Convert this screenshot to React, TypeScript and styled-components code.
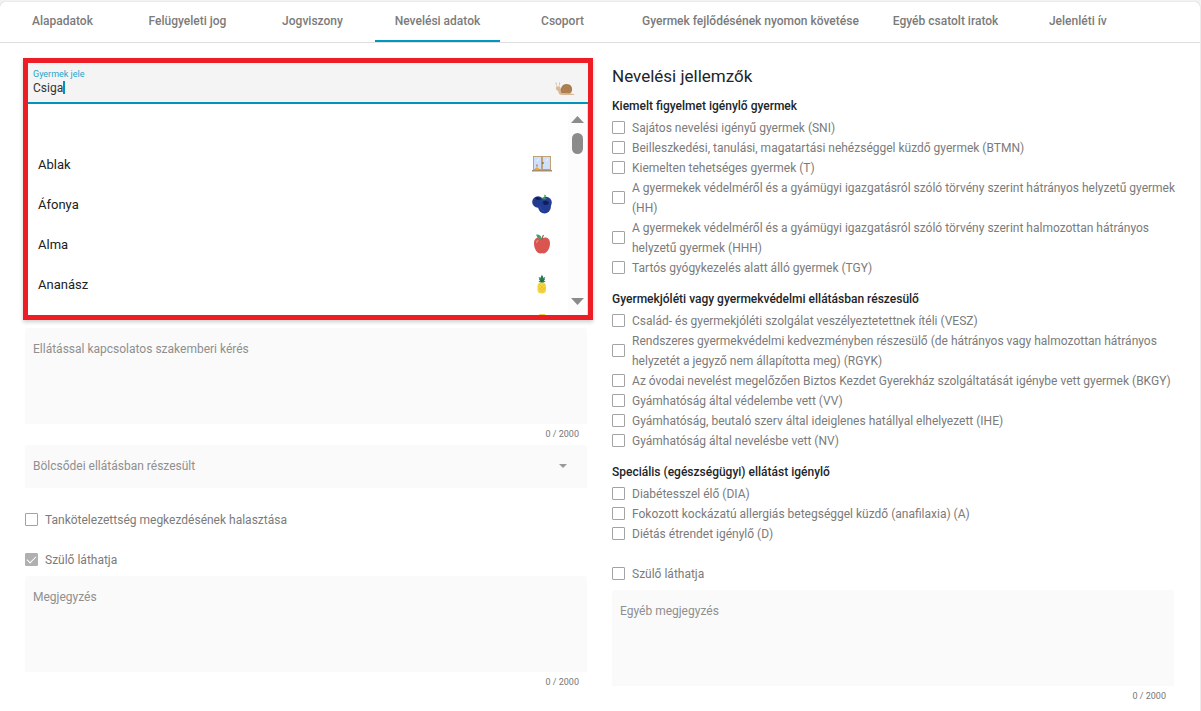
import React, { useId, useState } from "react";
import styled, { createGlobalStyle } from "styled-components";

const GlobalStyle = createGlobalStyle`
  *, *::before, *::after { box-sizing: border-box; }
  body {
    margin: 0;
    background: #f2f2f2;
    color: #212529;
    font-family: Roboto, "Liberation Sans", sans-serif;
    font-size: 12px;
    line-height: 20px;
  }
  button, input, select, textarea { font: inherit; color: inherit; }
`;

const Page = styled.div`
  display: flex;
  min-height: 100vh;
  padding: 2px 1px 0 0;
`;

const Card = styled.main`
  flex: 1;
  min-width: 0;
  background: #fff;
  border-radius: 5px 5px 0 0;
  box-shadow: 0 0 1px rgba(0, 0, 0, 0.3);
`;

const Tabs = styled.nav`
  display: flex;
  height: 41px;
  border-bottom: 1px solid #dedede;
`;

const Tab = styled.button<{ $active?: boolean }>`
  flex: none;
  min-width: 125px;
  padding: 0 17px;
  border: 0;
  border-bottom: 2px solid ${(p) => (p.$active ? "#0097c0" : "transparent")};
  background: none;
  color: #7b7b7b;
  font-weight: 500;
  cursor: pointer;
`;

const Columns = styled.div`
  display: grid;
  grid-template-columns: minmax(0, 1fr) minmax(0, 1fr);
  gap: 25px;
  padding: 15px 26px 0 25px;
`;

const Column = styled.section`
  display: flex;
  flex-direction: column;
`;

const Combo = styled.div`
  margin: 0 -6px 8px -2px;
  border: 5px solid #ee1c25;
  background: #fff;
  box-shadow: 0 2px 4px rgba(0, 0, 0, 0.2);
`;

const ComboField = styled.div`
  display: flex;
  align-items: flex-end;
  justify-content: space-between;
  height: 41px;
  padding: 0 13px 6px 5px;
  border-bottom: 2px solid #0094bb;
  background: #f4f4f4;
`;

const ComboText = styled.div`
  display: flex;
  flex-direction: column;
`;

const FloatingLabel = styled.label`
  color: #1fa5cb;
  font-size: 9px;
  line-height: 10px;
`;

const InputLine = styled.div`
  display: flex;
  align-items: center;
  height: 17px;
`;

const ComboInput = styled.input`
  field-sizing: content;
  padding: 0;
  border: 0;
  outline: 0;
  background: none;
  color: #333;
  line-height: 16px;
`;

const Caret = styled.span`
  width: 2px;
  height: 13px;
  background: #0094bb;
`;

const Popup = styled.div`
  display: flex;
  height: 211px;
  overflow: hidden;
`;

const Options = styled.ul`
  flex: 1;
  margin: 0;
  padding: 0;
  list-style: none;
`;

const Option = styled.li`
  display: flex;
  align-items: center;
  justify-content: space-between;
  height: 40px;
  padding: 0 16px 0 10px;
  color: #212121;
  font-size: 13px;
`;

const OptionName = styled.span`
  padding-top: 2px;
`;

const ScrollTrack = styled.div`
  display: flex;
  flex-direction: column;
  align-items: center;
  width: 20px;
  padding: 12px 1px 10px 0;
  border-right: 1px solid #e0e0e0;
  background: #fcfcfc;
`;

const ScrollThumb = styled.div`
  width: 11px;
  height: 21px;
  margin: 10px 0 auto;
  border-radius: 6px;
  background: #8b8b8b;
`;

const Box = styled.div`
  display: flex;
  flex-direction: column;
  height: 96px;
  padding: 11px 8px 0;
  border-radius: 3px 3px 0 0;
  background: #fafafa;
`;

const BoxLabel = styled.label`
  color: #8f8f8f;
`;

const Area = styled.textarea`
  flex: 1;
  padding: 0;
  border: 0;
  outline: 0;
  background: none;
  resize: none;
`;

const Counter = styled.div`
  padding-right: 8px;
  color: #777;
  font-size: 9px;
  line-height: 20px;
  text-align: right;
`;

const SelectBox = styled.div`
  display: flex;
  align-items: center;
  height: 43px;
  margin: 1px 0 22px;
  padding: 0 20px 1px 8px;
  border-radius: 3px 3px 0 0;
  background: #fafafa;
`;

const Select = styled.select`
  flex: 1;
  padding: 0;
  border: 0;
  outline: 0;
  background: none;
  appearance: none;
  color: #8f8f8f;
`;

const CheckRow = styled.label<{ $gapBelow?: number }>`
  display: flex;
  align-items: center;
  gap: 7px;
  margin-right: -8px;
  margin-bottom: ${(p) => p.$gapBelow ?? 0}px;
  color: #7b7b7b;
`;

const Check = styled.input`
  flex: none;
  display: grid;
  place-items: center;
  width: 13px;
  height: 13px;
  margin: 0 0 1px;
  border: 1px solid #a3a3a3;
  border-radius: 1px;
  background: #fff;
  appearance: none;

  &:checked {
    border-color: #b0b0b0;
    background: #b0b0b0;
  }

  &:checked::after {
    content: "";
    width: 9px;
    height: 5px;
    border: solid #fff;
    border-width: 0 0 1px 1px;
    transform: translateY(-1px) rotate(-45deg);
  }
`;

const Title = styled.h2`
  margin: 8px 0 10px;
  font-size: 17px;
  font-weight: 400;
  line-height: 20px;
`;

const Group = styled.fieldset`
  min-width: 0;
  margin: 0 0 11px;
  padding: 0;
  border: 0;

  &:last-of-type {
    margin-bottom: 20px;
  }
`;

const Legend = styled.legend`
  margin-bottom: 2px;
  padding: 0;
  font-weight: 500;
`;

const Snail = () => (
  <svg width="20" height="14" viewBox="0 0 20 14" aria-hidden="true">
    <path d="M2 5 1 1M4 5l.6-4" stroke="#d8bfa5" strokeWidth=".7" fill="none" />
    <circle cx="1" cy="1" r=".6" fill="#c9aa8c" />
    <circle cx="4.600" cy="1" r=".6" fill="#c9aa8c" />
    <path d="M.8 6c0-2 4.600-2.400 5 .5.3 2 1.200 3.500 3 4l6.500.8 4 .9c.5.400 0 .8-.7.8H7c-2.500 0-3.600-1.200-3.800-4C1.800 8.200.8 7.500.8 6Z" fill="#d6b999" />
    <path d="M6.500 11c-2-4 .5-9 5-9 4 0 6 3 5.500 6.200-.3 1.500-1 2.500-2 3Z" fill="#a97b4c" />
    <path d="M8.500 10c-1-3 .5-5.500 3.200-5.500s3.700 2.200 3.200 4.200c-.6 2-4.500 2-4.600 0 0-1.700 2.200-2 2.600-.7" fill="none" stroke="#ba8b5b" strokeWidth=".8" />
  </svg>
);

const WindowIcon = () => (
  <svg width="20" height="16" viewBox="0 0 20 16" aria-hidden="true">
    <path d="M1 0h18v14H1z" fill="#bfa274" />
    <path d="M2 1h7v12H2zM11 1h7v12h-7z" fill="#cfe0fd" />
    <path d="m5 5 2-2M14 5l2-2" stroke="#f1f6ff" />
    <path d="M0 14h20v1.500H0z" fill="#a58e70" />
    <path d="M5 12V9" stroke="#6fae74" strokeWidth=".8" />
    <circle cx="5" cy="9.200" r="1" fill="#e28580" />
    <path d="M3 12h4l-.5 2h-3z" fill="#f4a52a" />
    <path d="M11 6v2" stroke="#665447" />
  </svg>
);

const Blueberry = () => (
  <svg width="20" height="20" viewBox="0 0 20 20" aria-hidden="true">
    <circle cx="6" cy="8" r="5.800" fill="#223b8c" />
    <circle cx="14" cy="8.500" r="5.800" fill="#263f91" />
    <circle cx="12.500" cy="13" r="6.400" fill="#213c92" />
    <path d="m3 4 2-1 3 1 1 1.500-4 .5Z" fill="#101d5c" />
    <path d="m10.500 8 3-1.500L17 8l-1 2.500-4 .5Z" fill="#111c5d" />
    <path d="M12 5.500c-1.500 0-2.500-1-2-2l2 1L12.500.5 14 1.500 13 4l2 1Z" fill="#409666" />
    <path d="M8 12c0 3 2 5 4 5" fill="none" stroke="#3450a5" strokeWidth=".8" />
  </svg>
);

const Apple = () => (
  <svg width="20" height="20" viewBox="0 0 20 20" aria-hidden="true">
    <path d="M10 4.500C5 2 2 5 2 9.500 2 14.500 5 19.500 8.500 19.500c1 0 2-.4 3 0C15 19.500 18 14 18 9.500 18 5 15 2 10 4.500Z" fill="#da5550" />
    <path d="M10 6c0-2 .5-3.500 1.500-5" stroke="#9b5848" strokeWidth="1.200" fill="none" />
    <path d="M9.500 5C6 5 4.500 3 4.300.5 8 .5 9.500 2 9.500 5Z" fill="#4a9b72" />
    <path d="M4.500 9c0-2 .7-2.500 1.800-2.700" stroke="#f08c83" strokeWidth="1.200" fill="none" />
  </svg>
);

const Pineapple = () => (
  <svg width="20" height="20" viewBox="0 0 20 20" aria-hidden="true">
    <path d="M10 9.500 6.500 7.500 8 6.500 6.500 3l2 .8L10 .5l1.200 3.300 2-.8L12 6.500l1.500 1Z" fill="#34895c" />
    <path d="M10 2v6M7.500 5l2.500 3 2.500-3" fill="none" stroke="#22644a" />
    <rect x="5.500" y="8.500" width="8.500" height="11" rx="3.800" fill="#f5d640" />
    <path d="m7 10 6 6M6.500 13l5 5M13 10l-6 6M13.500 13l-5 5" stroke="#dfb830" strokeWidth=".6" />
  </svg>
);

const Banana = () => (
  <svg width="20" height="20" viewBox="0 0 20 20" aria-hidden="true">
    <path d="M7 0h6c3 8 0 15-9 19l-2-2C8 13 9 7 7 0Z" fill="#f6cf3b" />
  </svg>
);

const Arrow = ({ up, width = 13, height = 7, color = "#8b8b8b" }: { up?: boolean; width?: number; height?: number; color?: string }) => (
  <svg width={width} height={height} viewBox="0 0 12 6" preserveAspectRatio="none" aria-hidden="true">
    <path d={up ? "M0 6 6 0l6 6Z" : "M0 0h12L6 6Z"} fill={color} />
  </svg>
);

const tabs = [
  "Alapadatok",
  "Felügyeleti jog",
  "Jogviszony",
  "Nevelési adatok",
  "Csoport",
  "Gyermek fejlődésének nyomon követése",
  "Egyéb csatolt iratok",
  "Jelenléti ív",
];

const signs = [
  { id: "none", name: "", Icon: null },
  { id: "window", name: "Ablak", Icon: WindowIcon },
  { id: "blueberry", name: "Áfonya", Icon: Blueberry },
  { id: "apple", name: "Alma", Icon: Apple },
  { id: "pineapple", name: "Ananász", Icon: Pineapple },
  { id: "banana", name: "", Icon: Banana },
];

const groups = [
  {
    title: "Kiemelt figyelmet igénylő gyermek",
    items: [
      "Sajátos nevelési igényű gyermek (SNI)",
      "Beilleszkedési, tanulási, magatartási nehézséggel küzdő gyermek (BTMN)",
      "Kiemelten tehetséges gyermek (T)",
      "A gyermekek védelméről és a gyámügyi igazgatásról szóló törvény szerint hátrányos helyzetű gyermek (HH)",
      "A gyermekek védelméről és a gyámügyi igazgatásról szóló törvény szerint halmozottan hátrányos helyzetű gyermek (HHH)",
      "Tartós gyógykezelés alatt álló gyermek (TGY)",
    ],
  },
  {
    title: "Gyermekjóléti vagy gyermekvédelmi ellátásban részesülő",
    items: [
      "Család- és gyermekjóléti szolgálat veszélyeztetettnek ítéli (VESZ)",
      "Rendszeres gyermekvédelmi kedvezményben részesülő (de hátrányos vagy halmozottan hátrányos helyzetét a jegyző nem állapította meg) (RGYK)",
      "Az óvodai nevelést megelőzően Biztos Kezdet Gyerekház szolgáltatását igénybe vett gyermek (BKGY)",
      "Gyámhatóság által védelembe vett (VV)",
      "Gyámhatóság, beutaló szerv által ideiglenes hatállyal elhelyezett (IHE)",
      "Gyámhatóság által nevelésbe vett (NV)",
    ],
  },
  {
    title: "Speciális (egészségügyi) ellátást igénylő",
    items: [
      "Diabétesszel élő (DIA)",
      "Fokozott kockázatú allergiás betegséggel küzdő (anafilaxia) (A)",
      "Diétás étrendet igénylő (D)",
    ],
  },
];

function Checkbox({ label, checked, gapBelow }: { label: string; checked?: boolean; gapBelow?: number }) {
  return (
    <CheckRow $gapBelow={gapBelow}>
      <Check type="checkbox" defaultChecked={checked} />
      <span>{label}</span>
    </CheckRow>
  );
}

function NoteField({ label }: { label: string }) {
  const id = useId();
  const [text, setText] = useState("");
  return (
    <div>
      <Box>
        <BoxLabel htmlFor={id}>{label}</BoxLabel>
        <Area id={id} maxLength={2000} value={text} onChange={(e) => setText(e.target.value)} />
      </Box>
      <Counter>{text.length} / 2000</Counter>
    </div>
  );
}

function SignPicker() {
  const id = useId();
  const [value, setValue] = useState("Csiga");
  return (
    <Combo>
      <ComboField>
        <ComboText>
          <FloatingLabel htmlFor={id}>Gyermek jele</FloatingLabel>
          <InputLine>
            <ComboInput id={id} role="combobox" aria-expanded="true" aria-controls="signs" value={value} onChange={(e) => setValue(e.target.value)} />
            <Caret />
          </InputLine>
        </ComboText>
        <Snail />
      </ComboField>
      <Popup>
        <Options id="signs" role="listbox" aria-label="Gyermek jele">
          {signs.map(({ id: sign, name, Icon }) => (
            <Option key={sign} role="option" onClick={() => setValue(name)}>
              <OptionName>{name}</OptionName>
              {Icon && <Icon />}
            </Option>
          ))}
        </Options>
        <ScrollTrack>
          <Arrow up />
          <ScrollThumb />
          <Arrow />
        </ScrollTrack>
      </Popup>
    </Combo>
  );
}

export default function App() {
  const [active, setActive] = useState(3);
  return (
    <Page>
      <GlobalStyle />
      <Card>
        <Tabs>
          {tabs.map((tab, i) => (
            <Tab key={tab} type="button" $active={i === active} onClick={() => setActive(i)}>
              {tab}
            </Tab>
          ))}
        </Tabs>
        <Columns>
          <Column>
            <SignPicker />
            <NoteField label="Ellátással kapcsolatos szakemberi kérés" />
            <SelectBox>
              <Select aria-label="Bölcsődei ellátásban részesült" defaultValue="">
                <option value="">Bölcsődei ellátásban részesült</option>
                <option>Igen</option>
                <option>Nem</option>
              </Select>
              <Arrow width={8} height={4} color="#999" />
            </SelectBox>
            <Checkbox label="Tankötelezettség megkezdésének halasztása" gapBelow={20} />
            <Checkbox label="Szülő láthatja" checked gapBelow={6} />
            <NoteField label="Megjegyzés" />
          </Column>
          <Column>
            <Title>Nevelési jellemzők</Title>
            {groups.map((group) => (
              <Group key={group.title}>
                <Legend>{group.title}</Legend>
                {group.items.map((item) => (
                  <Checkbox key={item} label={item} />
                ))}
              </Group>
            ))}
            <Checkbox label="Szülő láthatja" gapBelow={6} />
            <NoteField label="Egyéb megjegyzés" />
          </Column>
        </Columns>
      </Card>
    </Page>
  );
}
